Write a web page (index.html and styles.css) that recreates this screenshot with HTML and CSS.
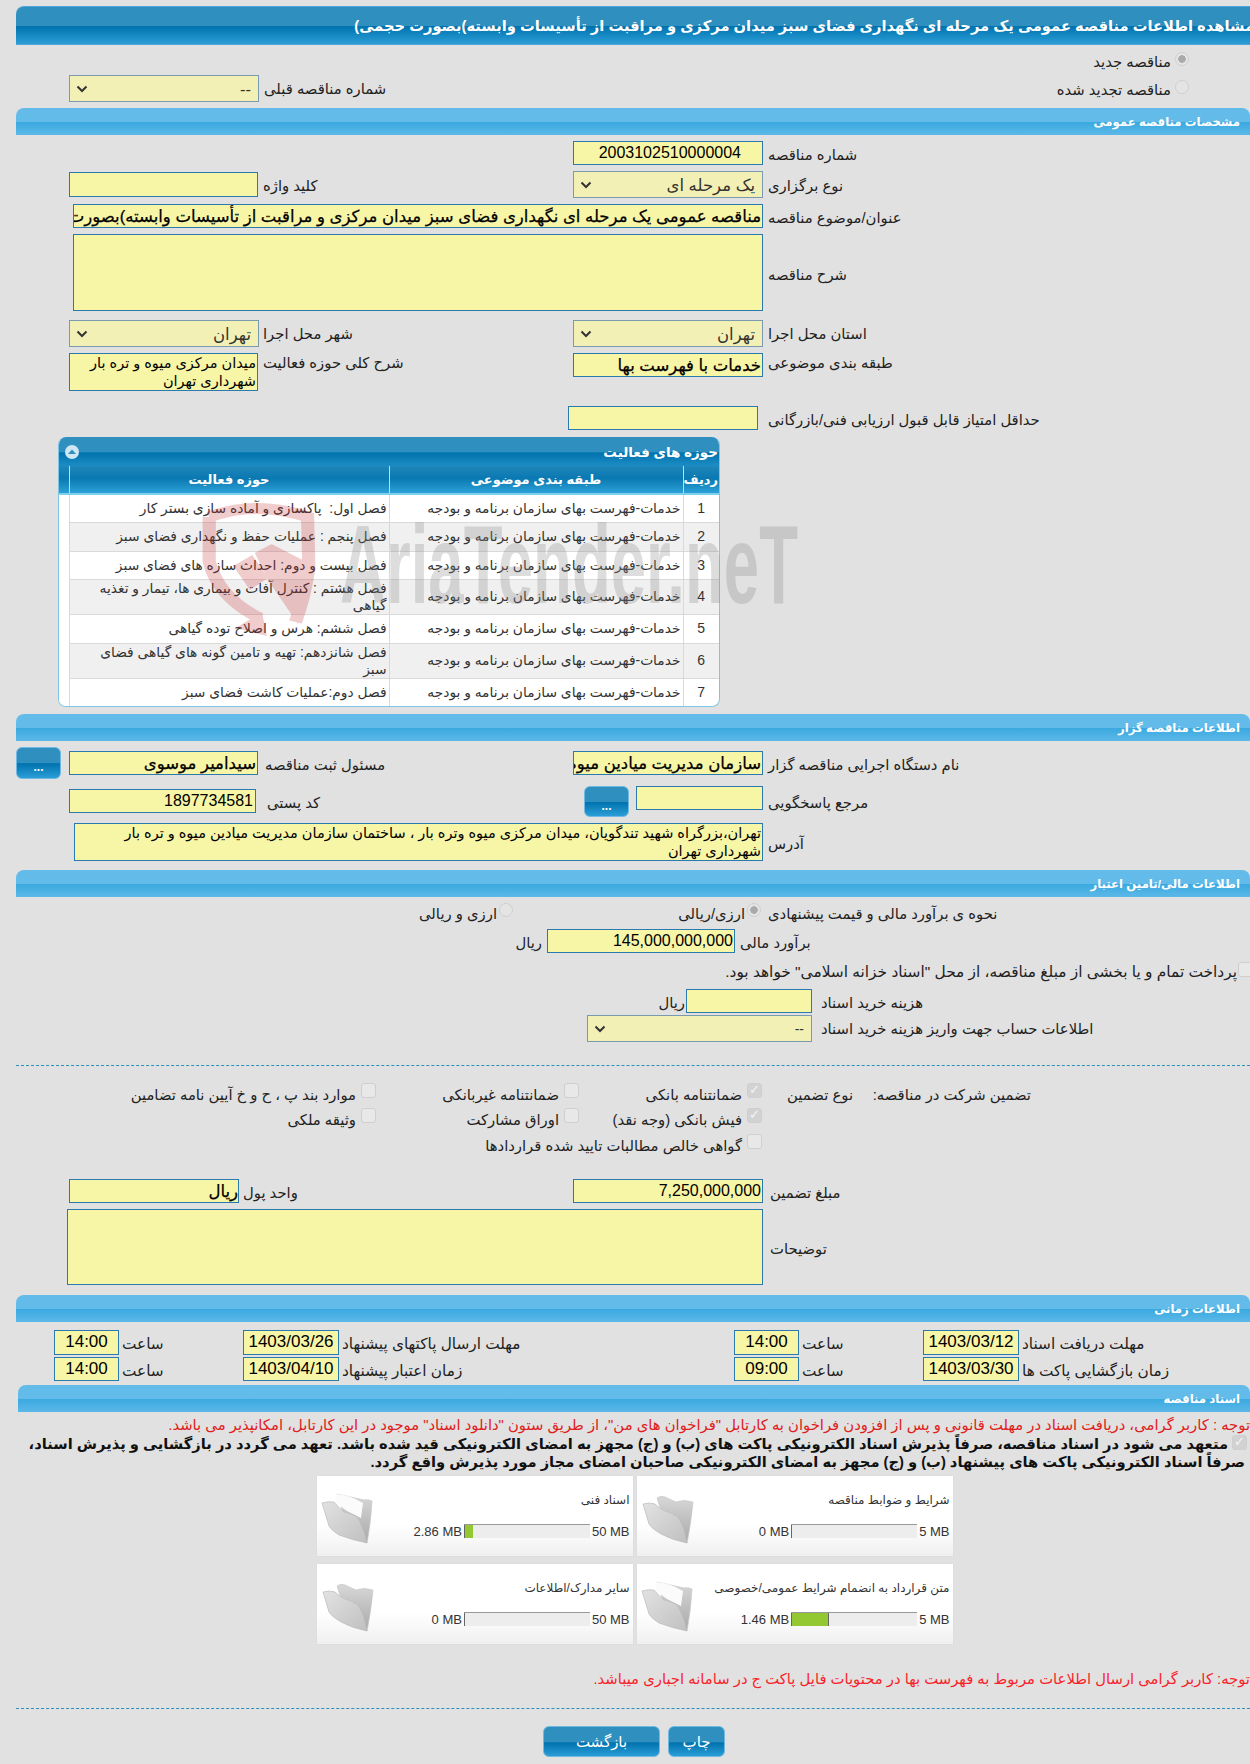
FILE: index.html
```html
<!DOCTYPE html>
<html lang="fa">
<head>
<meta charset="utf-8">
<title>مشاهده اطلاعات مناقصه</title>
<link rel="stylesheet" href="styles.css">
</head>
<body>
<main class="page">
  <h1 class="title"><span>مشاهده اطلاعات مناقصه عمومی یک مرحله ای نگهداری فضای سبز میدان مرکزی و مراقبت از تأسیسات وابسته)بصورت حجمی)</span></h1>

  <div class="opt-row first"><span class="radio on"></span><span class="opt">مناقصه جدید</span></div>
  <div class="form prev">
    <div class="sel c2"><span>--</span><svg class="chev" viewBox="0 0 12 8"><path d="M1.5 1.5 6 6l4.5-4.5"/></svg></div>
    <label class="lab">شماره مناقصه قبلی</label>
    <div class="renew"><span class="radio"></span><span class="opt">مناقصه تجدید شده</span></div>
  </div>

  <h2 class="section m6">مشخصات مناقصه عمومی</h2>

  <div class="form m6 h24">
    <div class="field c4 ltr-num tender-no">2003102510000004</div>
    <label class="lab c5">شماره مناقصه</label>
  </div>
  <div class="form m6">
    <div class="field c2 w189 mt1 h25"></div>
    <label class="lab lab-mid mt1">کلید واژه</label>
    <div class="sel c4"><span>یک مرحله ای</span><svg class="chev" viewBox="0 0 12 8"><path d="M1.5 1.5 6 6l4.5-4.5"/></svg></div>
    <label class="lab c5 mt1">نوع برگزاری</label>
  </div>
  <div class="form m6">
    <div class="field wide strong">مناقصه عمومی یک مرحله ای نگهداری فضای سبز میدان مرکزی و مراقبت از تأسیسات وابسته)بصورت حجمی)</div>
    <label class="lab c5">عنوان/موضوع مناقصه</label>
  </div>
  <div class="form m6">
    <div class="field wide h77"></div>
    <label class="lab c5 center-y">شرح مناقصه</label>
  </div>
  <div class="form m9">
    <div class="sel c2"><span>تهران</span><svg class="chev" viewBox="0 0 12 8"><path d="M1.5 1.5 6 6l4.5-4.5"/></svg></div>
    <label class="lab lab-mid">شهر محل اجرا</label>
    <div class="sel c4"><span>تهران</span><svg class="chev" viewBox="0 0 12 8"><path d="M1.5 1.5 6 6l4.5-4.5"/></svg></div>
    <label class="lab c5">استان محل اجرا</label>
  </div>
  <div class="form m6">
    <div class="field c2 w189 area">میدان مرکزی میوه و تره بار شهرداری تهران</div>
    <label class="lab lab-mid lab-top">شرح کلی حوزه فعالیت</label>
    <div class="field c4 strong">خدمات با فهرست بها</div>
    <label class="lab c5 lab-top">طبقه بندی موضوعی</label>
  </div>
  <div class="form m15">
    <div class="field c4 shifted"></div>
    <label class="lab c5">حداقل امتیاز قابل قبول ارزیابی فنی/بازرگانی</label>
  </div>

  <section class="panel">
    <header class="panel-head">
      <svg class="collapse" viewBox="0 0 16 16"><circle cx="8" cy="8" r="7" fill="#cfe6f3"/><path d="M4 10l4-4.500 4 4.500z" fill="#2f8fbe"/></svg>
      <span>حوزه های فعالیت</span>
    </header>
    <table class="acts">
      <thead>
        <tr><th class="num">ردیف</th><th class="cat">طبقه بندی موضوعی</th><th class="act">حوزه فعالیت</th><th class="pad"></th></tr>
      </thead>
      <tbody>
        <tr class="h28"><td class="num">1</td><td class="cat">خدمات-فهرست بهای سازمان برنامه و بودجه</td><td class="act">فصل اول:&nbsp; پاکسازی و آماده سازی بستر کار</td><td class="pad"></td></tr>
        <tr class="h29"><td class="num">2</td><td class="cat">خدمات-فهرست بهای سازمان برنامه و بودجه</td><td class="act">فصل پنجم : عملیات حفظ و نگهداری فضای سبز</td><td class="pad"></td></tr>
        <tr class="h28"><td class="num">3</td><td class="cat">خدمات-فهرست بهای سازمان برنامه و بودجه</td><td class="act">فصل بیست و دوم: احداث سازه های فضای سبز</td><td class="pad"></td></tr>
        <tr class="h35"><td class="num">4</td><td class="cat">خدمات-فهرست بهای سازمان برنامه و بودجه</td><td class="act">فصل هشتم : کنترل آفات و بیماری ها، تیمار و تغذیه گیاهی</td><td class="pad"></td></tr>
        <tr class="h29"><td class="num">5</td><td class="cat">خدمات-فهرست بهای سازمان برنامه و بودجه</td><td class="act">فصل ششم: هرس و اصلاح توده گیاهی</td><td class="pad"></td></tr>
        <tr class="h35"><td class="num">6</td><td class="cat">خدمات-فهرست بهای سازمان برنامه و بودجه</td><td class="act">فصل شانزدهم: تهیه و تامین گونه های گیاهی فضای سبز</td><td class="pad"></td></tr>
        <tr class="h28"><td class="num">7</td><td class="cat">خدمات-فهرست بهای سازمان برنامه و بودجه</td><td class="act">فصل دوم:عملیات کاشت فضای سبز</td><td class="pad"></td></tr>
      </tbody>
    </table>
  </section>

  <h2 class="section m7">اطلاعات مناقصه گزار</h2>

  <div class="form-btn m6">
    <button class="dots">...</button>
    <div class="field w189 mt4 strong">سیدامیر موسوی</div>
    <label class="lab mt4 lab-mid">مسئول ثبت مناقصه</label>
    <div class="field c4 mt4 strong">سازمان مدیریت میادین میوه و تره بار</div>
    <label class="lab mt4 c5">نام دستگاه اجرایی مناقصه گزار</label>
  </div>
  <div class="form-refs m7">
    <div class="field mt3 ltr-num postal">1897734581</div>
    <label class="lab mt3 lab-post">کد پستی</label>
    <button class="dots low">...</button>
    <div class="field">&nbsp;</div>
    <label class="lab lab-ref mt3">مرجع پاسخگویی</label>
  </div>
  <div class="form m6">
    <div class="field wide-addr area">تهران،بزرگراه شهید تندگویان، میدان مرکزی میوه وتره بار ، ساختمان سازمان مدیریت میادین میوه و تره بار شهرداری تهران</div>
    <label class="lab c5 center-y">آدرس</label>
  </div>

  <h2 class="section m9">اطلاعات مالی/تامین اعتبار</h2>

  <div class="form-pay m6">
    <span class="opt opt-b">ارزی و ریالی</span><span class="radio"></span>
    <span class="opt opt-a">ارزی/ریالی</span><span class="radio on"></span>
    <label class="lab lab-pay">نحوه ی برآورد مالی و قیمت پیشنهادی</label>
  </div>
  <div class="form-est">
    <span class="lab">ریال</span>
    <div class="field ltr-num">145,000,000,000</div>
    <label class="lab">برآورد مالی</label>
  </div>
  <div class="treasury m8">
    <span class="check"></span>
    <span>پرداخت تمام و یا بخشی از مبلغ مناقصه، از محل "اسناد خزانه اسلامی" خواهد بود.</span>
  </div>
  <div class="form-cost">
    <span class="lab">ریال</span>
    <div class="field"></div>
    <label class="lab">هزینه خرید اسناد</label>
  </div>
  <div class="form-acct m2">
    <div class="sel"><span>--</span><svg class="chev" viewBox="0 0 12 8"><path d="M1.5 1.500 6 6l4.500-4.500"/></svg></div>
    <label class="lab">اطلاعات حساب جهت واریز هزینه خرید اسناد</label>
  </div>

  <hr class="dash m23">

  <div class="guar m17">
    <span class="gl g1">موارد بند پ ، ح و خ آیین نامه تضامین</span><span class="check"></span>
    <span class="gl g2">ضمانتنامه غیربانکی</span><span class="check"></span>
    <span class="gl g3">ضمانتنامه بانکی</span><span class="check on"></span>
    <span class="gl g4">نوع تضمین</span>
    <span class="gl g5">تضمین شرکت در مناقصه:</span>
  </div>
  <div class="guar h26">
    <span class="gl g1">وثیقه ملکی</span><span class="check"></span>
    <span class="gl g2">اوراق مشارکت</span><span class="check"></span>
    <span class="gl g3">فیش بانکی (وجه نقد)</span><span class="check on"></span>
  </div>
  <div class="guar h45">
    <span class="gl g1"></span><span class="nocheck"></span>
    <span class="gl g2"></span><span class="nocheck"></span>
    <span class="gl g3">گواهی خالص مطالبات تایید شده قراردادها</span><span class="check"></span>
  </div>

  <div class="form-amount">
    <div class="field strong unit">ریال</div>
    <label class="lab">واحد پول</label>
    <div class="field ltr-num">7,250,000,000</div>
    <label class="lab">مبلغ تضمین</label>
  </div>
  <div class="form-notes m6">
    <div class="field h76"></div>
    <label class="lab center-y">توضیحات</label>
  </div>

  <h2 class="section m10">اطلاعات زمانی</h2>

  <div class="dates m8">
    <div class="field t ltr-num">14:00</div><label class="lab">ساعت</label>
    <div class="field d ltr-num">1403/03/26</div><label class="lab">مهلت ارسال پاکتهای پیشنهاد</label>
    <div class="field t ltr-num">14:00</div><label class="lab">ساعت</label>
    <div class="field d ltr-num">1403/03/12</div><label class="lab">مهلت دریافت اسناد</label>
  </div>
  <div class="dates m2">
    <div class="field t ltr-num">14:00</div><label class="lab">ساعت</label>
    <div class="field d ltr-num">1403/04/10</div><label class="lab">زمان اعتبار پیشنهاد</label>
    <div class="field t ltr-num">09:00</div><label class="lab">ساعت</label>
    <div class="field d ltr-num">1403/03/30</div><label class="lab">زمان بازگشایی پاکت ها</label>
  </div>

  <h2 class="section m4 inset">اسناد مناقصه</h2>

  <p class="note first-note">توجه : کاربر گرامی، دریافت اسناد در مهلت قانونی و پس از افزودن فراخوان به کارتابل "فراخوان های من"، از طریق ستون "دانلود اسناد" موجود در این کارتابل، امکانپذیر می باشد.</p>
  <p class="pledge"><span class="check on"></span>متعهد می شود در اسناد مناقصه، صرفاً پذیرش اسناد الکترونیکی پاکت های (ب) و (ج) مجهز به امضای الکترونیکی قید شده باشد. تعهد می گردد در بازگشایی و پذیرش اسناد، صرفاً اسناد الکترونیکی پاکت های پیشنهاد (ب) و (ج) مجهز به امضای الکترونیکی صاحبان امضای مجاز مورد پذیرش واقع گردد.</p>

  <div class="cards">
    <article class="card">
      <svg class="folder" viewBox="0 0 70 70"><use href="#fld"/></svg>
      <div class="card-main">
        <div class="card-title">اسناد فنی</div>
        <div class="meter"><span>2.86 MB</span><div class="track"><i class="fill-a"></i></div><span>50 MB</span></div>
      </div>
    </article>
    <article class="card">
      <svg class="folder" viewBox="0 0 70 70"><use href="#fld0"/></svg>
      <div class="card-main">
        <div class="card-title">شرایط و ضوابط مناقصه</div>
        <div class="meter"><span>0 MB</span><div class="track"><i class="fill-0"></i></div><span>5 MB</span></div>
      </div>
    </article>
    <article class="card">
      <svg class="folder" viewBox="0 0 70 70"><use href="#fld0"/></svg>
      <div class="card-main">
        <div class="card-title">سایر مدارک/اطلاعات</div>
        <div class="meter"><span>0 MB</span><div class="track"><i class="fill-0"></i></div><span>50 MB</span></div>
      </div>
    </article>
    <article class="card">
      <svg class="folder" viewBox="0 0 70 70"><use href="#fld"/></svg>
      <div class="card-main">
        <div class="card-title">متن قرارداد به انضمام شرایط عمومی/خصوصی</div>
        <div class="meter"><span>1.46 MB</span><div class="track"><i class="fill-b"></i></div><span>5 MB</span></div>
      </div>
    </article>
  </div>

  <p class="note second-note">توجه: کاربر گرامی ارسال اطلاعات مربوط به فهرست بها در محتویات فایل پاکت ج در سامانه اجباری میباشد.</p>

  <hr class="dash m20">

  <div class="actions">
    <button class="act-btn back">بازگشت</button>
    <button class="act-btn print">چاپ</button>
  </div>
</main>

<svg class="defs" width="0" height="0">
  <defs>
    <linearGradient id="fg" x1="0" y1="0" x2="1" y2="1"><stop offset="0" stop-color="#e2e2e2"/><stop offset="1" stop-color="#c0c0c0"/></linearGradient>
    <linearGradient id="bg" x1="0" y1="0" x2="0" y2="1"><stop offset="0" stop-color="#d8d8d8"/><stop offset="1" stop-color="#a8a8a8"/></linearGradient>
    <g id="fld0">
      <path d="M20 18Q24 15 28 17L39 22Q47 19 56 22Q54 44 50 63L30 50Z" fill="url(#bg)" stroke="#c8c8c8" stroke-width="0.700"/>
      <path d="M6 24Q13 22 18 24Q23 29 28 31Q36 33 41 37Q47 46 50 63Q35 60 24 54Q15 49 12 44Z" fill="url(#fg)" stroke="#bcbcbc" stroke-width="0.700"/>
    </g>
    <g id="fld">
      <path d="M20 14L47 20Q51 19 55 21Q54 42 50 63L30 45Z" fill="url(#bg)" stroke="#c8c8c8" stroke-width="0.700"/>
      <path d="M19 14Q33 15 46 23L44 38L30 31L19 23Z" fill="#fbfbfb"/>
      <path d="M5 23Q12 21 17 22Q22 28 27 32Q35 34 39 36Q45 42 50 63Q35 60 22 55Q14 50 12 46Z" fill="url(#fg)" stroke="#bcbcbc" stroke-width="0.700"/>
    </g>
  </defs>
</svg>

<div class="mark">
  <svg class="shield" viewBox="0 0 150 160" preserveAspectRatio="none">
    <path d="M16 27Q55 10 98 27L99 78Q96 105 88 132" fill="none" stroke="#c92d2d" stroke-width="11"/>
    <path d="M16 27L16 72Q24 108 58 128" fill="none" stroke="#c92d2d" stroke-width="11"/>
    <path d="M60 122L64 146L38 138Z" fill="#c92d2d"/>
    <path d="M36 76L52 65L65 88L50 100Z" fill="#c92d2d"/>
    <path d="M54 63L68 54L97 72L90 134L66 92Z" fill="#c92d2d"/>
  </svg>
  <svg class="mark-text" viewBox="0 0 460 100"><text x="0" y="93" textLength="458" lengthAdjust="spacingAndGlyphs">AriaTender.neT</text></svg>
</div>
</body>
</html>
```

FILE: styles.css
```css
* { box-sizing: border-box; }
html, body { margin: 0; padding: 0; }
body {
  position: relative;
  width: 1250px;
  height: 1764px;
  overflow: hidden;
  background: #e1e1e1;
  color: #222;
  font-family: "Liberation Sans", "DejaVu Sans", sans-serif;
  font-size: 15px;
}
.page { width: 1234px; margin-left: 16px; padding-top: 6px; }

/* bars */
.title {
  margin: 0;
  height: 39px;
  direction: rtl;
  display: flex;
  justify-content: flex-start;
  align-items: center;
  overflow: hidden;
  border-radius: 8px 0 0 0;
  border-top: 1px solid #4ea5dc;
  border-bottom: 1px solid #4ea5dc;
  background: linear-gradient(#2f8fbe 0, #2f8fbe 50%, #0072ad 52%, #2b9ed8 100%);
  color: #fff;
  font-size: 14.700px;
  font-weight: bold;
  white-space: nowrap;
}
.title span { margin-right: -4px; }
.section {
  margin-bottom: 0;
  height: 27px;
  direction: rtl;
  padding: 3px 10px 0 0;
  border-radius: 8px 8px 0 0;
  background: linear-gradient(#63bbea 0, #63bbea 50%, #3aa9e0 52%, #5cb8e8 100%);
  color: #fff;
  font-size: 11.700px;
  font-weight: bold;
  line-height: 21px;
}
.section.inset { margin-left: 2px; }

/* spacing */
.m2 { margin-top: 2px; } .m4 { margin-top: 4px; } .m6 { margin-top: 6px; } .m7 { margin-top: 7px; }
.m8 { margin-top: 8px; } .m9 { margin-top: 9px; } .m10 { margin-top: 10px; } .m15 { margin-top: 15px; }
.m17 { margin-top: 17px; } .m20 { margin-top: 20px; } .m23 { margin-top: 23px; }
.mt1 { margin-top: 1px; } .mt3 { margin-top: 3px; } .mt4 { margin-top: 4px; }
h2.m4 { margin-top: 4px; } h2.m6 { margin-top: 6px; } h2.m7 { margin-top: 7px; } h2.m9 { margin-top: 9px; } h2.m10 { margin-top: 10px; }

/* fields */
.field {
  height: 24px;
  direction: rtl;
  padding: 0 1px;
  overflow: hidden;
  white-space: nowrap;
  background: #f7f5a6;
  border: 1px solid #2a7ab0;
  color: #000;
  font-size: 15px;
  line-height: 22px;
}
.strong { font-size: 16.500px; -webkit-text-stroke: 0.25px #000; }
.ltr-num { text-align: right; font-size: 16px; }
.tender-no { padding-right: 21px; }
.sel {
  position: relative;
  height: 27px;
  direction: rtl;
  padding-right: 7px;
  background: #f3f0b5;
  border: 1px solid #7a9ab0;
  color: #333;
  font-size: 16.500px;
  line-height: 26px;
}
.chev {
  position: absolute;
  left: 6px;
  top: 9px;
  width: 12px;
  height: 8px;
  fill: none;
  stroke: #333;
  stroke-width: 2;
}
.lab {
  height: 24px;
  direction: rtl;
  text-align: left;
  white-space: nowrap;
  padding-left: 5px;
  color: #222;
  font-size: 14.800px;
  line-height: 28px;
}
.opt { font-size: 14.800px; color: #222; line-height: 20px; }
.radio {
  flex: none;
  display: inline-block;
  width: 14px;
  height: 14px;
  border-radius: 50%;
  border: 1px solid #cfcfcf;
  background: #e4e4e4;
}
.radio.on { background: radial-gradient(circle, #aaa 0 3.500px, #e4e4e4 4px); }
.check, .nocheck {
  flex: none;
  display: inline-block;
  width: 15px;
  height: 15px;
  border-radius: 3px;
}
.check {
  position: relative;
  border: 1px solid #cfcfcf;
  background: #e8e8e8;
}
.check.on { background: #d2d2d2; }
.check.on::after {
  content: "✓";
  position: absolute;
  left: 1px;
  top: -2px;
  color: #f4f4f4;
  font: bold 13px "DejaVu Sans", sans-serif;
}

/* main two-column form */
.form {
  display: grid;
  grid-template-columns: 53px 190px 314px 190px 1fr;
  align-items: start;
}
.c2 { grid-column: 2; }
.c4 { grid-column: 4; }
.c5 { grid-column: 5; }
.w189 { width: 189px; }
.h24 { min-height: 24px; }
.h25 { height: 25px; }
.h77 { height: 77px; }
.h76 { height: 76px; }
.wide { grid-column: 2 / 5; margin-left: 4px; }
.wide-addr { grid-column: 2 / 5; margin-left: 5px; }
.area {
  height: 38px;
  white-space: normal;
  font-size: 14.500px;
  line-height: 18px;
}
.center-y { align-self: center; }
.lab-mid { grid-column: 3; padding-left: 4px; }
.lab-top { line-height: 20px; }
.shifted { margin: 0 5px 0 -5px; }

.opt-row {
  display: flex;
  direction: rtl;
  align-items: flex-start;
  gap: 4px;
  height: 23px;
  padding-right: 61px;
}
.opt-row.first { margin-top: 7px; }
.prev { height: 27px; }
.renew {
  grid-column: 4 / 6;
  display: flex;
  direction: rtl;
  gap: 4px;
  padding: 5px 61px 0 0;
}

/* activity panel */
.panel {
  width: 662px;
  height: 270px;
  margin: 7px 0 0 42px;
  direction: rtl;
  overflow: hidden;
  border: 1px solid #7fc6e6;
  border-top: 0;
  border-radius: 8px;
  background: #fff;
}
.panel-head {
  display: flex;
  justify-content: space-between;
  align-items: center;
  height: 29px;
  padding: 0 1px 0 5px;
  background: linear-gradient(#2f8fbe 0, #2f8fbe 50%, #0072ad 55%, #1d8dc4 100%);
  color: #fff;
  font-size: 13.500px;
  font-weight: bold;
}
.collapse { order: 2; width: 16px; height: 16px; }
.acts {
  width: 660px;
  border-collapse: collapse;
  table-layout: fixed;
}
.acts th {
  height: 28px;
  border-left: 1px solid #b9dff0;
  border-bottom: 2px solid #7fd0f0;
  background: linear-gradient(#1f87ba 0, #0a78b1 45%, #2ca1d6 100%);
  color: #fff;
  font-size: 13px;
  font-weight: bold;
}
.acts th.pad { border-left: 0; }
.acts td {
  padding: 0 2px;
  border-left: 1px solid #d9d9d9;
  border-bottom: 1px solid #d9d9d9;
  color: #333;
  font-size: 13.800px;
  line-height: 17px;
}
.acts td.act { padding-left: 10px; }
.acts td.pad { border-bottom: 0; border-left: 0; background: #fff; }
.acts tbody tr:nth-child(even) td:not(.pad) { background: #f0f0f0; }
.num { width: 36px; text-align: center; }
.acts td.num { font-size: 14px; }
.cat { width: 294px; }
.act { width: 320px; }
.pad { width: 12px; }
tr.h28 { height: 28px; }
tr.h29 { height: 29px; }
tr.h35 { height: 35px; }

/* buttons */
.dots {
  width: 45px;
  height: 32px;
  padding: 8px 0 0;
  border: 1px solid #6fb9e2;
  border-radius: 6px;
  background: linear-gradient(#2f8fbe 0, #2f8fbe 50%, #0072ad 52%, #2b9ed8 100%);
  color: #fff;
  font: bold 12px "Liberation Sans", sans-serif;
}
.dots.low { width: 45px; height: 31px; }

.form-btn {
  display: grid;
  grid-template-columns: 53px 190px 314px 190px 1fr;
  align-items: start;
}
.form-btn > .dots { grid-column: 1; width: 45px; }
.form-btn .lab-mid { grid-column: 3; padding-left: 6px; }
.form-refs {
  display: grid;
  grid-template-columns: 53px 187px 328px 52px 127px 1fr;
  align-items: start;
}
.form-refs > .field:first-child { grid-column: 2; }
.lab-post { padding-left: 11px; }
.postal { padding-right: 2px; }
.lab-ref { padding-left: 5px; }

.form-pay {
  display: grid;
  grid-template-columns: 483px 14px 234px 14px 1fr;
  height: 26px;
  direction: ltr;
}
.opt-b, .form-pay .opt-a { direction: rtl; text-align: right; padding-right: 2px; line-height: 22px; }
.lab-pay { padding-left: 7px; line-height: 22px; }
.form-est {
  display: grid;
  grid-template-columns: 531px 188px 1fr;
  height: 25px;
}
.form-est > .lab:first-child { text-align: right; padding-right: 5px; }
.treasury {
  display: flex;
  direction: rtl;
  align-items: flex-start;
  gap: 1px;
  height: 27px;
  margin-right: -3px;
  color: #222;
  font-size: 15.400px;
  line-height: 20px;
}
.form-cost {
  display: grid;
  grid-template-columns: 670px 126px 1fr;
  height: 24px;
}
.form-cost > .lab:first-child { text-align: right; padding-right: 1px; }
.form-cost > .lab:last-child, .form-acct > .lab { padding-left: 9px; }
.form-acct {
  display: grid;
  grid-template-columns: 571px 225px 1fr;
}
.form-acct .sel { grid-column: 2; font-size: 14px; }

.dash {
  height: 0;
  margin-bottom: 0;
  border: 0;
  border-top: 1px dashed #2d8fbd;
}
hr.m23 { margin-top: 23px; }
hr.m20 { margin-top: 20px; }

/* guarantees */
.guar {
  display: grid;
  grid-template-columns: 345px 15px 188px 15px 168px 15px 98px 175px 1fr;
  height: 25px;
}
.h26 { height: 26px; }
.h45 { height: 45px; }
.gl {
  height: 24px;
  direction: rtl;
  padding-right: 5px;
  text-align: right;
  white-space: nowrap;
  font-size: 14.800px;
  line-height: 24px;
}
.g4 { padding-right: 7px; }
.g5 { padding-right: 4px; }

.form-amount {
  display: grid;
  grid-template-columns: 53px 170px 334px 190px 1fr;
  align-items: start;
  height: 24px;
}
.form-amount > .field:first-child { grid-column: 2; }
.unit { text-align: right; padding-right: 0; }
.form-amount > .lab:last-child { padding-left: 7px; }
.form-amount > .lab:nth-child(2) { padding-left: 4px; }
.form-notes {
  display: grid;
  grid-template-columns: 51px 696px 1fr;
}
.form-notes .field { grid-column: 2; }
.form-notes .lab { padding-left: 7px; }

/* dates */
.dates {
  display: grid;
  grid-template-columns: 38px 65px 124px 96px 395px 65px 124px 96px 1fr;
}
.dates > .field:first-child { grid-column: 2; }
.dates .lab { padding-left: 3px; font-size: 15.300px; }
.dates .field { text-align: center; font-size: 17px; }
.dates.m8 .field { height: 25px; }

/* notes */
.note {
  margin: 0;
  direction: rtl;
  white-space: nowrap;
  color: #e0201a;
  font-size: 14.800px;
}
.first-note { height: 18px; margin-top: 4px; line-height: 18px; }
.second-note { height: 18px; margin-top: 26px; line-height: 18px; color: #f81f2a; }
.pledge {
  height: 42px;
  margin: 0 5px 0 0;
  padding-top: 1px;
  direction: rtl;
  color: #111;
  font-size: 14.700px;
  font-weight: bold;
  line-height: 18px;
}
.pledge .check { float: right; margin: 0 -2px 0 4px; }

/* cards */
.cards {
  display: grid;
  grid-template-columns: 316px 316px;
  gap: 8px 4px;
  width: 636px;
  margin-left: 300.500px;
}
.card {
  display: flex;
  height: 80px;
  background: linear-gradient(#fff 60%, #f0f0f0 100%);
  box-shadow: 0 0 1px #ccc;
}
.folder { flex: none; width: 70px; height: 70px; margin: 4px -15px 0 0; }
.card-main { flex: 1; direction: rtl; padding: 15px 3px 0 4px; }
.card-title { height: 33px; color: #333; font-size: 12px; line-height: 18px; }
.meter {
  display: flex;
  direction: ltr;
  justify-content: flex-end;
  align-items: center;
  gap: 2px;
  height: 14px;
  color: #333;
  font-size: 13px;
}
.track {
  display: flex;
  width: 126px;
  height: 14px;
  border-top: 1px solid #999;
  background: #ededed;
}
.track i { display: block; height: 100%; border-left: 1px solid #666; }
.fill-a { width: 9px; background: #93c833; }
.fill-b { width: 38px; background: #93c833; border-right: 1px solid #666; }
.fill-0 { width: 1px; }

/* actions */
.actions {
  display: flex;
  gap: 8px;
  margin: 17px 0 0 527px;
}
.act-btn {
  height: 31px;
  border: 1px solid #6fb9e2;
  border-radius: 6px;
  background: linear-gradient(#2f8fbe 0, #2f8fbe 50%, #0072ad 55%, #2b9ed8 100%);
  color: #fff;
  font: 15px "DejaVu Sans", sans-serif;
}
.back { width: 117px; }
.print { width: 57px; }

/* watermark */
.defs { position: absolute; }
.mark { position: absolute; left: 190px; top: 490px; width: 620px; height: 160px; pointer-events: none; }
.shield { position: absolute; left: 0; top: 0; width: 180px; height: 160px; opacity: 0.24; }
.mark-text { position: absolute; left: 150px; top: 20px; width: 460px; height: 100px; opacity: 0.28; }
.mark-text text { fill: #888; font: bold 111px "Liberation Sans", sans-serif; }
```
